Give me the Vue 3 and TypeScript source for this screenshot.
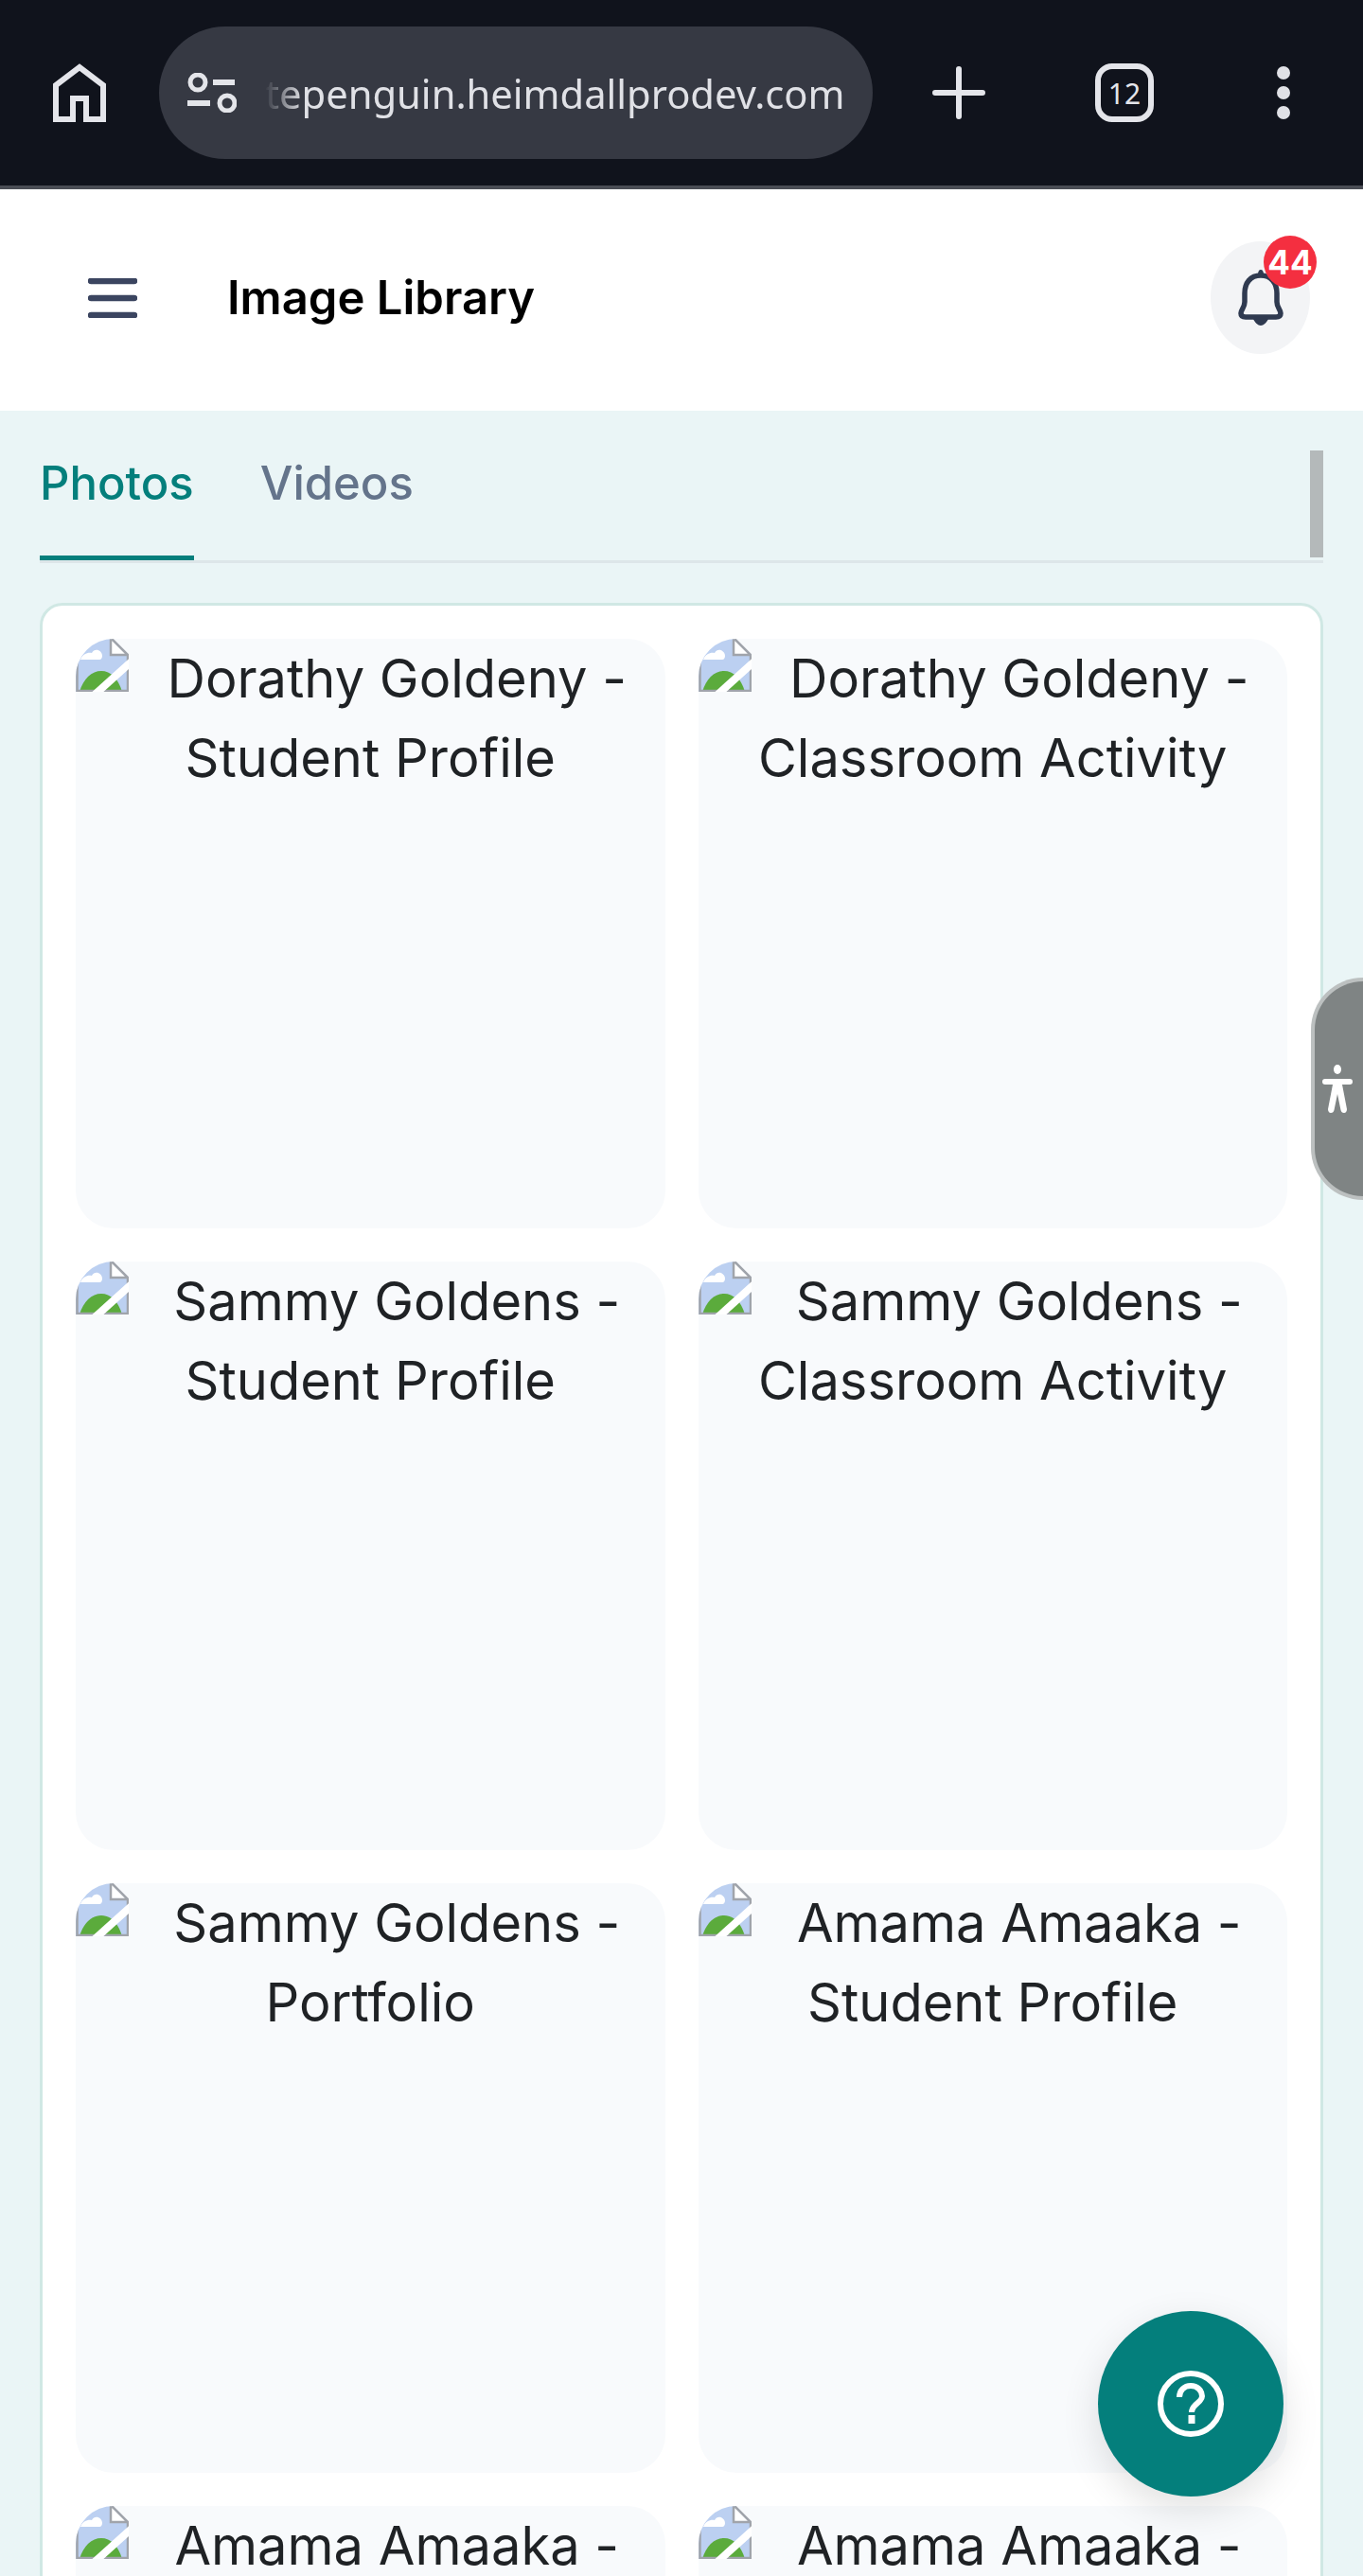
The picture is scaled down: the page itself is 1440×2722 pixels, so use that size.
<script setup lang="ts">
interface LibraryItem {
  id: number;
  alt: string;
}

const items: LibraryItem[] = [
  { id: 1, alt: 'Dorathy Goldeny - Student Profile' },
  { id: 2, alt: 'Dorathy Goldeny - Classroom Activity' },
  { id: 3, alt: 'Sammy Goldens - Student Profile' },
  { id: 4, alt: 'Sammy Goldens - Classroom Activity' },
  { id: 5, alt: 'Sammy Goldens - Portfolio' },
  { id: 6, alt: 'Amama Amaaka - Student Profile' },
  { id: 7, alt: 'Amama Amaaka - Classroom Activity' },
  { id: 8, alt: 'Amama Amaaka - Portfolio' }
];
</script>

<template>
  <div class="page">
    <!-- browser chrome -->
    <div class="browser-bar">
      <svg class="home-icon" viewBox="0 0 56 62" fill="none">
        <path d="M3 59V23L28 4L53 23V59H35V37H21V59Z" stroke="#e4e5ea" stroke-width="6" />
      </svg>
      <div class="url-pill">
        <svg class="tune-icon" viewBox="0 0 52 42" fill="none" stroke="#e4e5ea">
          <circle cx="11" cy="10" r="8" stroke-width="5" />
          <path d="M27 10H50" stroke-width="6" />
          <path d="M0 32H24" stroke-width="6" />
          <circle cx="42" cy="32" r="8" stroke-width="5" />
        </svg>
        <span class="url-text">tepenguin.heimdallprodev.com</span>
      </div>
      <svg class="plus-icon" viewBox="0 0 56 56" fill="none">
        <path d="M28 3V53M3 28H53" stroke="#e4e5ea" stroke-width="6" stroke-linecap="round" />
      </svg>
      <div class="tab-count">12</div>
      <div class="dots"><i></i><i></i><i></i></div>
    </div>

    <!-- app header -->
    <header class="app-header">
      <svg class="menu-icon" viewBox="0 0 52 42" fill="none">
        <path d="M3 3H49M3 21H49M3 39H49" stroke="#3b4560" stroke-width="6.5" stroke-linecap="round" />
      </svg>
      <h1 class="title">Image Library</h1>
      <div class="bell-button">
        <svg class="bell-icon" viewBox="0 0 48 59" fill="none">
          <path d="M24 6C13 6 7 14 7 25V34C7 40 3 42 3 46C3 49 5 50 8 50H40C43 50 45 49 45 46C45 42 41 40 41 34V25C41 14 35 6 24 6Z" stroke="#2f3a50" stroke-width="5.500" />
          <path d="M16 52H32C30 56 27 59 24 59C21 59 18 56 16 52ZM21 5C21 2 22 0 24 0C26 0 27 2 27 5Z" fill="#2f3a50" />
        </svg>
        <span class="badge">44</span>
      </div>
    </header>

    <main class="content">
      <div class="tabs">
        <button class="tab tab-active" type="button">Photos</button>
        <button class="tab" type="button">Videos</button>
        <span class="tabs-scrollbar"></span>
      </div>

      <section class="library-card">
        <div class="grid">
          <div v-for="item in items" :key="item.id" class="thumb">
            <svg class="broken-icon" viewBox="0 0 56 56">
              <path d="M0 0H38L56 18V56H0Z" fill="#bcd0f1" />
              <path d="M5 22C7 16 13 14 17 15C20 9 28 12 28 18C28 20 27 22 25 22Z" fill="#fff" />
              <path d="M4 56C8 42 17 34 27 34C37 34 45 42 49 56Z" fill="#5bab3c" />
              <path d="M37 0V17H56Z" fill="#fff" />
              <path d="M37 0V17H55M38 0L55 17V55H1.500V0" fill="none" stroke="#a0a4ab" stroke-width="2.500" />
              <path d="M19 60L61 22" stroke="#fff" stroke-width="8" />
            </svg>
            {{ item.alt }}
          </div>
        </div>
      </section>
    </main>

    <div class="a11y-tab">
      <svg class="a11y-icon" viewBox="0 0 32 51" fill="#fff">
        <ellipse cx="16" cy="5" rx="4" ry="5" />
        <path d="M3 15H29C31 15 32 16 32 18C32 20 31 21 29 21H21L26 47C26 49 25 51 23 51C21 51 20 50 19.500 48L16 31L12.500 48C12 50 11 51 9 51C7 51 6 49 6 47L11 21H3C1 21 0 20 0 18C0 16 1 15 3 15Z" />
      </svg>
    </div>

    <button class="help-fab" type="button">
      <svg viewBox="0 0 70 70" width="70" height="70" fill="none" stroke="#fff" stroke-width="6">
        <circle cx="35" cy="35" r="32" />
        <path d="M23 28C23 21 28 16 35 16C42 16 47 21 47 27C47 34 36 35 36 44" />
        <path d="M36 47V56" stroke-width="7" />
      </svg>
    </button>
  </div>
</template>

<style scoped>
.page {
  position: relative;
  width: 1440px;
  height: 2722px;
  overflow: hidden;
  background: #eaf5f6;
  font-family: Inter, "Noto Sans", sans-serif;
}

.browser-bar {
  display: flex;
  align-items: center;
  height: 196px;
  border-bottom: 4px solid #4a4d55;
  background: #10131c;
}

.home-icon {
  width: 56px;
  height: 62px;
  margin-left: 56px;
}

.url-pill {
  display: flex;
  align-items: center;
  width: 754px;
  height: 140px;
  margin-left: 56px;
  border-radius: 70px;
  background: #363943;
}

.tune-icon {
  width: 52px;
  height: 42px;
  margin-left: 30px;
  flex: none;
}

.url-text {
  margin-left: 30px;
  font-family: "Noto Sans", sans-serif;
  font-size: 41.7px;
  color: #e0e1e6;
  white-space: nowrap;
  -webkit-mask-image: linear-gradient(90deg, transparent 0, #000 40px);
  mask-image: linear-gradient(90deg, transparent 0, #000 40px);
}

.plus-icon {
  width: 56px;
  height: 56px;
  margin-left: 63px;
}

.tab-count {
  display: flex;
  align-items: center;
  justify-content: center;
  box-sizing: border-box;
  width: 62px;
  height: 62px;
  margin-left: 116px;
  border: 6px solid #e4e5ea;
  border-radius: 18px;
  font-family: "Noto Sans", sans-serif;
  font-size: 30px;
  color: #e4e5ea;
}

.dots {
  display: flex;
  flex-direction: column;
  gap: 7px;
  margin-left: 130px;
}

.dots i {
  display: block;
  width: 14px;
  height: 14px;
  border-radius: 50%;
  background: #e0e1e6;
}

.app-header {
  display: flex;
  align-items: center;
  height: 229px;
  padding-bottom: 5px;
  background: #fff;
}

.menu-icon {
  width: 52px;
  height: 42px;
  margin-left: 93px;
}

.title {
  margin: 0 0 0 95px;
  font-size: 49px;
  font-weight: 600;
  color: #000;
}

.bell-button {
  position: relative;
  display: flex;
  align-items: center;
  justify-content: center;
  width: 105px;
  height: 119px;
  margin-left: auto;
  margin-right: 56px;
  border-radius: 50%;
  background: #f3f4f6;
}

.bell-icon {
  width: 48px;
  height: 59px;
}

.badge {
  position: absolute;
  top: -6px;
  right: -7px;
  width: 56px;
  height: 56px;
  border-radius: 50%;
  background: #f42f40;
  color: #fff;
  font-size: 35px;
  font-weight: 700;
  line-height: 56px;
  text-align: center;
}

.content {
  padding: 0 42px;
}

.tabs {
  position: relative;
  display: flex;
  gap: 70px;
  padding-top: 40px;
  border-bottom: 3px solid #dde6e9;
}

.tab {
  padding: 0 0 40px;
  border: 0;
  border-bottom: 5px solid transparent;
  background: none;
  font-family: inherit;
  font-size: 49px;
  font-weight: 500;
  line-height: 73px;
  color: #64748b;
}

.tab-active {
  border-bottom-color: #047f7c;
  color: #047f7c;
}

.tabs-scrollbar {
  position: absolute;
  top: 42px;
  right: 0;
  width: 14px;
  height: 113px;
  background: #b4b9ba;
}

.library-card {
  margin-top: 42px;
  padding: 35px;
  border: 3px solid #d0e8e4;
  border-radius: 24px;
  background: #fff;
}

.grid {
  display: grid;
  grid-template-columns: 1fr 1fr;
  gap: 35px;
}

.thumb {
  aspect-ratio: 1;
  overflow: hidden;
  border-radius: 40px;
  background: #f8fafc;
  font-size: 56px;
  line-height: 84px;
  color: #1f2225;
  text-align: center;
}

.broken-icon {
  float: left;
  width: 56px;
  height: 56px;
}

.a11y-tab {
  position: absolute;
  top: 1033px;
  right: 0;
  display: flex;
  align-items: center;
  box-sizing: border-box;
  width: 55px;
  height: 235px;
  padding-left: 8px;
  border: 4px solid #bcc0c0;
  border-right: 0;
  border-radius: 56px 0 0 56px;
  background: #7f8484;
}

.a11y-icon {
  width: 32px;
  height: 51px;
}

.help-fab {
  position: absolute;
  top: 2442px;
  left: 1160px;
  display: flex;
  align-items: center;
  justify-content: center;
  width: 196px;
  height: 196px;
  padding: 0;
  border: 0;
  border-radius: 50%;
  background: #047f7c;
  box-shadow: 0 14px 40px rgba(0, 0, 0, 0.12);
}
</style>

<style>
body {
  background: #eaf5f6;
}
</style>
